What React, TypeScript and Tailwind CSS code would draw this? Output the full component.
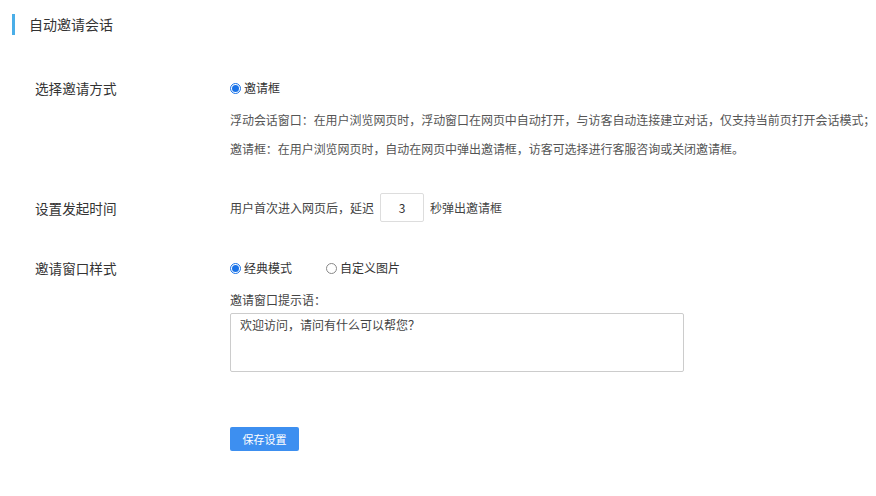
import { useState } from "react"

function Radio({ checked, label }: { checked: boolean; label: string }) {
  return (
    <label className="flex items-center gap-[3px] cursor-pointer">
      {checked ? (
        <span className="flex h-[11px] w-[11px] items-center justify-center rounded-full border border-[#1a73e8] bg-white">
          <span className="h-[7px] w-[7px] rounded-full bg-[#1a73e8]" />
        </span>
      ) : (
        <span className="h-[11px] w-[11px] rounded-full border border-[#888] bg-white" />
      )}
      <span>{label}</span>
    </label>
  )
}

export default function App() {
  const [delay, setDelay] = useState("3")
  const [tip, setTip] = useState("欢迎访问，请问有什么可以帮您？")

  return (
    <div className="min-h-[496px] w-[876px] overflow-hidden bg-white font-['Noto_Sans_CJK_SC',sans-serif] text-[#333]">
      {/* Title */}
      <div className="mt-[14px] flex h-[21px] items-center">
        <div className="ml-[12px] h-[21px] w-[3px] bg-[#4aaee8]" />
        <h1 className="ml-[14px] text-[14px] leading-[21px] text-[#333]">自动邀请会话</h1>
      </div>

      {/* 选择邀请方式 */}
      <div className="mt-[43px] grid grid-cols-[195px_1fr] pl-[35px]">
        <div className="text-[13.6px] leading-[20px]">选择邀请方式</div>
        <div className="text-[12px] leading-[20px]">
          <Radio checked label="邀请框" />
        </div>
      </div>
      <div className="mt-[7px] pl-[230px] text-[12px] leading-[29px] whitespace-nowrap tracking-[-0.05px] text-[#555]">
        <p>浮动会话窗口：在用户浏览网页时，浮动窗口在网页中自动打开，与访客自动连接建立对话，仅支持当前页打开会话模式；</p>
        <p>邀请框：在用户浏览网页时，自动在网页中弹出邀请框，访客可选择进行客服咨询或关闭邀请框。</p>
      </div>

      {/* 设置发起时间 */}
      <div className="mt-[30px] grid h-[29px] grid-cols-[195px_1fr] items-center pl-[35px]">
        <div className="text-[13.6px] leading-[20px]">设置发起时间</div>
        <div className="flex items-center text-[12px] text-[#444]">
          <span>用户首次进入网页后，延迟</span>
          <input
            value={delay}
            onChange={(e) => setDelay(e.target.value)}
            className="mx-[6px] h-[29px] w-[44px] rounded-[2px] border border-[#ddd] text-center text-[12px] text-[#333] outline-none"
          />
          <span>秒弹出邀请框</span>
        </div>
      </div>

      {/* 邀请窗口样式 */}
      <div className="mt-[36px] grid grid-cols-[195px_1fr] pl-[35px]">
        <div className="text-[13.6px] leading-[20px]">邀请窗口样式</div>
        <div className="text-[12px] leading-[20px]">
          <div className="flex items-center gap-[34px]">
            <Radio checked label="经典模式" />
            <Radio checked={false} label="自定义图片" />
          </div>
          <div className="mt-[12px] text-[#444]">邀请窗口提示语：</div>
          <textarea
            value={tip}
            onChange={(e) => setTip(e.target.value)}
            className="mt-[3px] block h-[59px] w-[454px] resize-none rounded-[2px] border border-[#ccc] px-[9px] py-[1px] text-[12px] leading-[20px] text-[#444] outline-none"
          />
          <button className="mt-[55px] h-[24px] w-[69px] rounded-[2px] bg-[#3d8ff0] text-[11px] text-white">
            保存设置
          </button>
        </div>
      </div>
    </div>
  )
}
